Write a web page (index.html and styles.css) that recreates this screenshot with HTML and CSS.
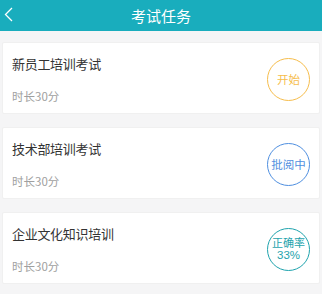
FILE: index.html
```html
<!DOCTYPE html>
<html lang="zh">
<head>
<meta charset="utf-8">
<link rel="stylesheet" href="styles.css">
</head>
<body>
<header class="bar">
  <svg class="back" width="9" height="15" viewBox="0 0 9 15"><path d="M8 1 L1.5 7.5 L8 14" fill="none" stroke="#fff" stroke-width="1.3"/></svg>
  <h1 class="title">考试任务</h1>
</header>
<main class="list">
  <div class="card">
    <div class="info">
      <div class="name">新员工培训考试</div>
      <div class="dur">时长30分</div>
    </div>
    <div class="badge orange">开始</div>
  </div>
  <div class="card">
    <div class="info">
      <div class="name">技术部培训考试</div>
      <div class="dur">时长30分</div>
    </div>
    <div class="badge blue">批阅中</div>
  </div>
  <div class="card">
    <div class="info">
      <div class="name">企业文化知识培训</div>
      <div class="dur">时长30分</div>
    </div>
    <div class="badge teal"><span class="ln">正确率</span><span class="ln num">33%</span></div>
  </div>
</main>
</body>
</html>
```
FILE: styles.css
```css
* { box-sizing: border-box; }
html, body { margin: 0; padding: 0; }
body {
  width: 322px;
  height: 294px;
  overflow: hidden;
  background: #f5f5f6;
  font-family: "Noto Sans CJK SC", "Liberation Sans", sans-serif;
}
.bar {
  position: relative;
  height: 31px;
  background: #19adbd;
  display: flex;
  align-items: center;
  justify-content: center;
}
.back {
  position: absolute;
  left: 4px;
  top: 7px;
}
.title {
  margin: 0;
  color: #fff;
  font-size: 15px;
  font-weight: normal;
  line-height: 31px;
}
.list {
  display: flex;
  flex-direction: column;
  gap: 13px;
  padding: 11px 2px 0 2px;
}
.card {
  height: 72px;
  background: #fff;
  border: 1px solid #f0f0f0;
  border-radius: 2px;
  display: flex;
  align-items: center;
  justify-content: space-between;
  padding: 0 9px 0 9px;
}
.info {
  display: flex;
  flex-direction: column;
  align-self: stretch;
  padding-top: 11px;
}
.name {
  font-size: 13px;
  color: #333;
  line-height: 20px;
  letter-spacing: -0.3px;
}
.dur {
  margin-top: 14px;
  font-size: 11.5px;
  color: #a0a0a0;
  line-height: 16px;
}
.badge {
  width: 43px;
  height: 43px;
  border-radius: 50%;
  border: 1.5px solid;
  display: flex;
  flex-direction: column;
  align-items: center;
  justify-content: center;
  text-align: center;
  font-size: 11.5px;
  line-height: 14px;
  margin-top: 2px;
}
.ln {
  display: block;
  font-size: 11px;
  line-height: 13px;
}
.num {
  font-family: "Liberation Sans", "Noto Sans CJK SC", sans-serif;
  font-size: 11.5px;
}
.orange { color: #f6bd4c; border-color: #f6bd4c; }
.blue { color: #4f8fe0; border-color: #4f8fe0; }
.teal { color: #1ea3ad; border-color: #1ea3ad; }
```
